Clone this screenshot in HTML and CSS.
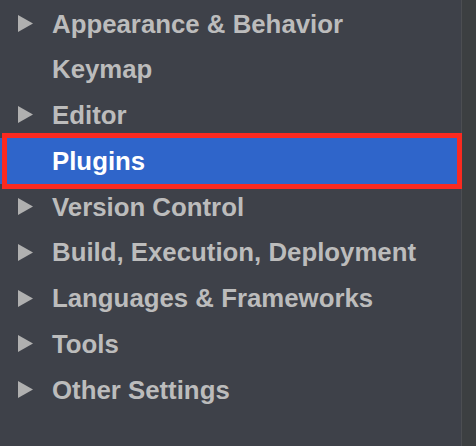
FILE: index.html
```html
<!DOCTYPE html>
<html>
<head>
<meta charset="utf-8">
<link rel="stylesheet" href="styles.css">
</head>
<body>
<div class="layout">
  <div class="tree">
    <div class="row"><span class="arrow"><svg width="16" height="18" viewBox="0 0 16 18"><path d="M0 0 L15 8.5 L0 17 Z" fill="#b0b0b0"/></svg></span><span class="label">Appearance &amp; Behavior</span></div>
    <div class="row"><span class="arrow"></span><span class="label">Keymap</span></div>
    <div class="row"><span class="arrow"><svg width="16" height="18" viewBox="0 0 16 18"><path d="M0 0 L15 8.5 L0 17 Z" fill="#b0b0b0"/></svg></span><span class="label">Editor</span></div>
    <div class="row selected"><span class="arrow"></span><span class="label">Plugins</span></div>
    <div class="row"><span class="arrow"><svg width="16" height="18" viewBox="0 0 16 18"><path d="M0 0 L15 8.5 L0 17 Z" fill="#b0b0b0"/></svg></span><span class="label">Version Control</span></div>
    <div class="row"><span class="arrow"><svg width="16" height="18" viewBox="0 0 16 18"><path d="M0 0 L15 8.5 L0 17 Z" fill="#b0b0b0"/></svg></span><span class="label">Build, Execution, Deployment</span></div>
    <div class="row"><span class="arrow"><svg width="16" height="18" viewBox="0 0 16 18"><path d="M0 0 L15 8.5 L0 17 Z" fill="#b0b0b0"/></svg></span><span class="label">Languages &amp; Frameworks</span></div>
    <div class="row"><span class="arrow"><svg width="16" height="18" viewBox="0 0 16 18"><path d="M0 0 L15 8.5 L0 17 Z" fill="#b0b0b0"/></svg></span><span class="label">Tools</span></div>
    <div class="row"><span class="arrow"><svg width="16" height="18" viewBox="0 0 16 18"><path d="M0 0 L15 8.5 L0 17 Z" fill="#b0b0b0"/></svg></span><span class="label">Other Settings</span></div>
  </div>
  <div class="divider"></div>
  <div class="side"></div>
</div>
</body>
</html>
```
FILE: styles.css
```css
html, body {
  margin: 0;
  padding: 0;
  height: 100%;
  overflow: hidden;
}
body {
  background: #3e4149;
  font-family: "Liberation Sans", Arial, sans-serif;
}
.layout {
  display: flex;
  height: 446px;
}
.tree {
  width: 461px;
  flex: none;
  padding-top: 1px;
  display: flex;
  flex-direction: column;
  background: #3e4149;
}
.divider {
  width: 1px;
  background: #4c4e52;
  flex: none;
}
.side {
  flex: 1;
  background: #3c3f41;
}
.row {
  position: relative;
  height: 45.8px;
  display: flex;
  align-items: center;
  flex: none;
}
.arrow {
  width: 52px;
  flex: none;
  padding-left: 18px;
  box-sizing: border-box;
  display: flex;
  align-items: center;
  height: 18px;
}
.label {
  color: #bcbcbc;
  font-weight: bold;
  font-size: 25.8px;
  white-space: nowrap;
  line-height: 1;
  position: relative;
  top: 0.5px;
}
.selected {
  background: #2f65ca;
}
.selected .label {
  color: #ffffff;
}
.selected::after {
  content: "";
  position: absolute;
  left: 2px;
  right: -1px;
  top: -5px;
  bottom: -5px;
  border: 5px solid #fb2a20;
  box-sizing: border-box;
}
```
